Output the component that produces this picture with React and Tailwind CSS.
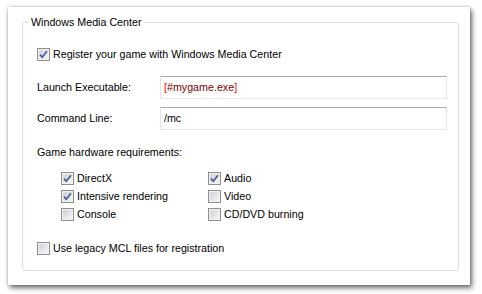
import React from 'react'

function Check({ checked }) {
  return (
    <svg width="13" height="13" viewBox="0 0 13 13" className="shrink-0">
      <defs>
        <linearGradient id="cbfill" x1="0" y1="0" x2="1" y2="1">
          <stop offset="0" stopColor="#cbcfd5" />
          <stop offset="1" stopColor="#f7f7f7" />
        </linearGradient>
      </defs>
      <rect x="0.5" y="0.5" width="12" height="12" fill="#f4f4f4" stroke="#8e8f8f" />
      <rect x="2" y="2" width="9" height="9" fill="url(#cbfill)" stroke="#e9e9e9" strokeWidth="0.6" />
      {checked && (
        <path d="M3 6.5 L5.2 9.3 L10 3.2" fill="none" stroke="#4a5f97" strokeWidth="1.8" strokeLinejoin="round" />
      )}
    </svg>
  )
}

function CheckRow({ checked, label }) {
  return (
    <div className="flex items-center h-[13px] gap-[3px]">
      <Check checked={checked} />
      <span className="leading-[13px] whitespace-nowrap">{label}</span>
    </div>
  )
}

function Field({ label, children }) {
  return (
    <div className="flex items-center h-[23px]">
      <span className="w-[123px] shrink-0">{label}</span>
      <div className="w-[287px] h-[23px] flex items-center pl-[3px] bg-white border border-[#e2e3ea] border-t-[#abadb3] border-b-[#e3e9ef]">
        {children}
      </div>
    </div>
  )
}

export default function App() {
  return (
    <div className="w-[482px] h-[294px] bg-white pt-[7px] pl-[8px] text-[10.7px] text-black" style={{ fontFamily: '"Liberation Sans", Arial, sans-serif' }}>
      <div className="w-[462px] h-[278px] bg-white shadow-[2px_3px_5px_rgba(0,0,0,0.55),0_0_3px_rgba(0,0,0,0.25)] pt-[15px] pl-[14px]">
        <div className="relative w-[437px] h-[249px] border border-[#d5dfe5] rounded-[3px] pl-[14px] flex flex-col">
          <span className="absolute left-[5px] -top-[7px] bg-white px-[3px] leading-[13px]">Windows Media Center</span>

          <div className="mt-[25px]">
            <CheckRow checked label="Register your game with Windows Media Center" />
          </div>

          <div className="mt-[15px]">
            <Field label="Launch Executable:">
              <span>
                <span className="text-[#ff0000]">[</span>
                <span className="text-[#7f0000]">#mygame.exe</span>
                <span className="text-[#ff0000]">]</span>
              </span>
            </Field>
          </div>

          <div className="mt-[8px]">
            <Field label="Command Line:">
              <span>/mc</span>
            </Field>
          </div>

          <div className="mt-[16px] leading-[13px]">Game hardware requirements:</div>

          <div className="mt-[13px] pl-[24px] grid grid-cols-[147px_1fr] gap-y-[5px]">
            <CheckRow checked label="DirectX" />
            <CheckRow checked label="Audio" />
            <CheckRow checked label="Intensive rendering" />
            <CheckRow label="Video" />
            <CheckRow label="Console" />
            <CheckRow label="CD/DVD burning" />
          </div>

          <div className="mt-[21px]">
            <CheckRow label="Use legacy MCL files for registration" />
          </div>
        </div>
      </div>
    </div>
  )
}
